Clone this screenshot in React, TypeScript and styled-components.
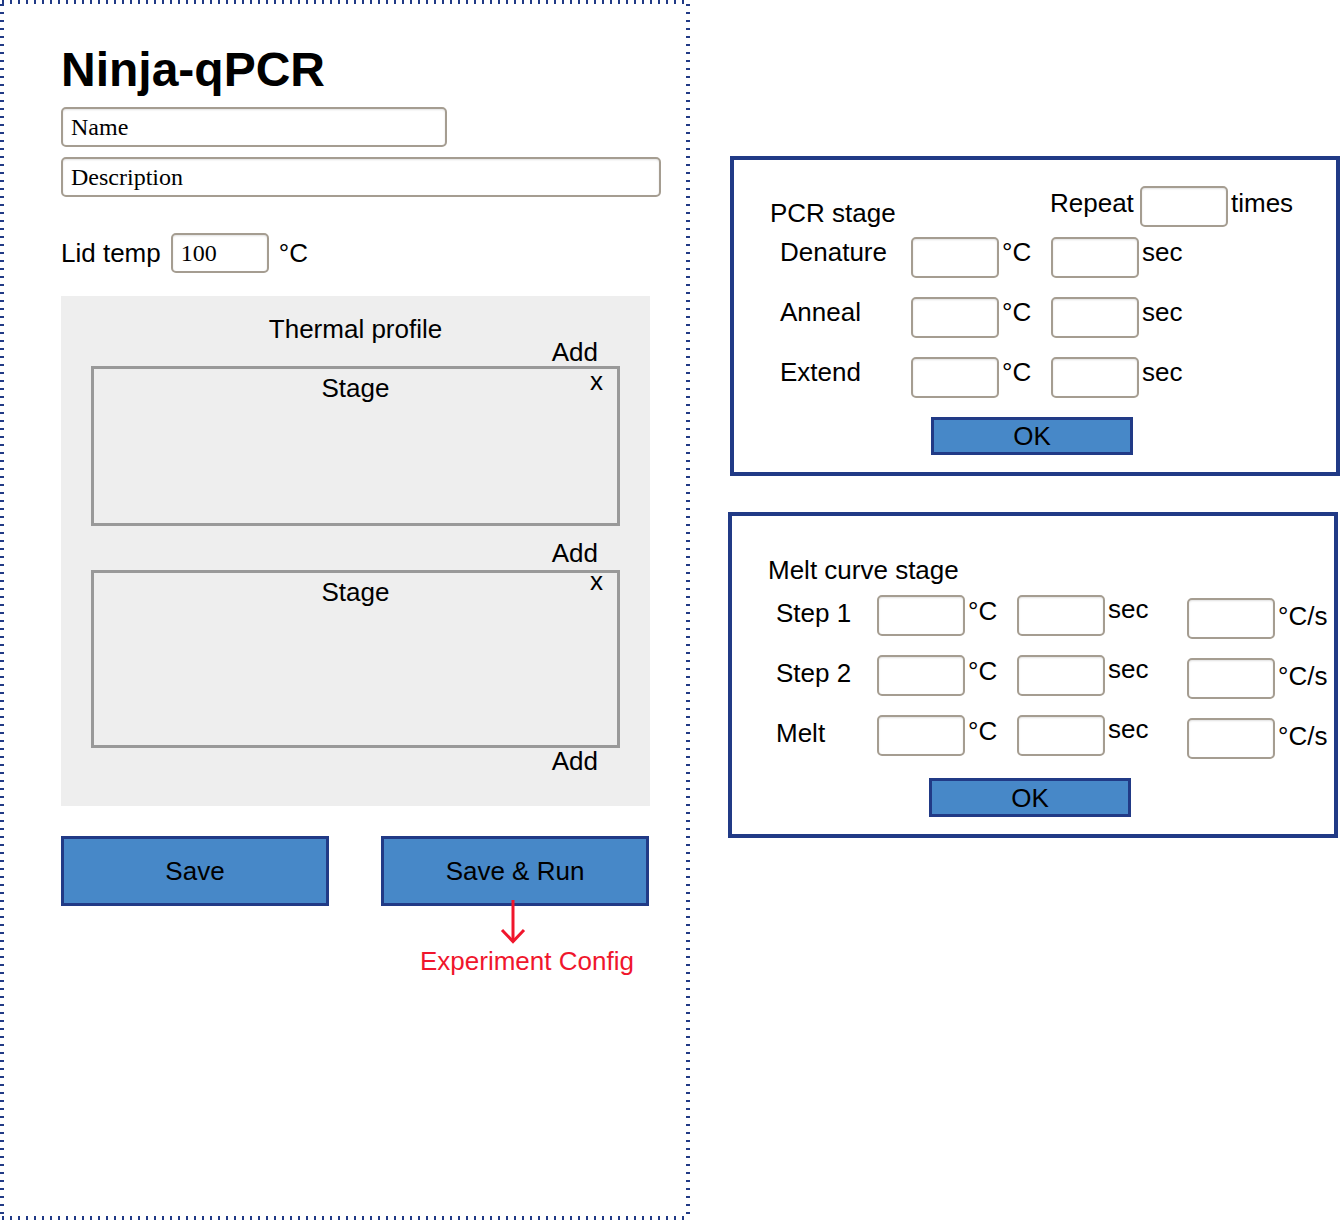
import React from "react";
import styled, { createGlobalStyle } from "styled-components";

const NAVY = "#213a86";
const BLUE = "#4788c8";
const RED = "#f0162c";
const FIELD_BORDER = "#a59d91";

const Global = createGlobalStyle`
  html, body { margin: 0; padding: 0; background: #ffffff; }
  body {
    font-family: "Liberation Sans", Arial, Helvetica, sans-serif;
    color: #000;
  }
  input::placeholder { color: #000; opacity: 1; }
`;

const Page = styled.div`
  display: flex;
  align-items: flex-start;
  width: 1340px;
  height: 1222px;
`;

/* ---------- left dotted frame ---------- */

const Frame = styled.main`
  box-sizing: border-box;
  flex-shrink: 0;
  width: 690px;
  height: 1220px;
  padding: 42px 0 0 61px;
  display: flex;
  flex-direction: column;
  align-items: flex-start;
  background-image:
    repeating-linear-gradient(to right, ${NAVY} 0 2px, transparent 2px 8px),
    repeating-linear-gradient(to right, ${NAVY} 0 2px, transparent 2px 8px),
    repeating-linear-gradient(to bottom, ${NAVY} 0 2px, transparent 2px 8px),
    repeating-linear-gradient(to bottom, ${NAVY} 0 2px, transparent 2px 8px);
  background-size: 100% 4px, 100% 4px, 4px 100%, 4px 100%;
  background-position: 2px 0, 2px 100%, 0 4px, 100% 4px;
  background-repeat: no-repeat;
`;

const Title = styled.h1`
  margin: 0;
  font-size: 48px;
  line-height: 56px;
  font-weight: bold;
`;

const TextField = styled.input<{ $w: number; $mt: number }>`
  box-sizing: border-box;
  width: ${(p) => p.$w}px;
  height: 40px;
  margin-top: ${(p) => p.$mt}px;
  padding: 0 0 0 8px;
  border: 2px solid ${FIELD_BORDER};
  border-radius: 5px;
  background: #fff;
  box-shadow: inset 0 1px 2px rgba(0, 0, 0, 0.12);
  font-family: "Liberation Serif", "Times New Roman", serif;
  font-size: 24px;
  color: #000;
  outline: none;
`;

const LidRow = styled.div`
  display: flex;
  align-items: center;
  margin-top: 36px;
  height: 40px;
`;

const LidLabel = styled.span`
  font-size: 26px;
  line-height: 30px;
  margin-right: 10px;
`;

const LidUnit = styled.span`
  font-size: 26px;
  line-height: 30px;
  margin-left: 10px;
`;

const ThermalPanel = styled.section`
  box-sizing: border-box;
  width: 589px;
  height: 510px;
  margin-top: 23px;
  padding: 21px 30px 0 30px;
  background: #eeeeee;
  display: flex;
  flex-direction: column;
`;

const PanelHeading = styled.div`
  font-size: 26px;
  line-height: 24px;
  text-align: center;
`;

const AddLink = styled.div<{ $mt: number }>`
  margin-top: ${(p) => p.$mt}px;
  padding-right: 22px;
  font-size: 26px;
  line-height: 24px;
  text-align: right;
`;

const StageBox = styled.div<{ $h: number; $mt: number }>`
  position: relative;
  box-sizing: border-box;
  flex-shrink: 0;
  width: 100%;
  height: ${(p) => p.$h}px;
  margin-top: ${(p) => p.$mt}px;
  padding-top: 7px;
  border: 3px solid #999999;
  font-size: 26px;
  line-height: 24px;
  text-align: center;
`;

const CloseMark = styled.span<{ $top: number }>`
  position: absolute;
  right: 14px;
  top: ${(p) => p.$top}px;
  font-size: 26px;
  line-height: 24px;
`;

const ButtonRow = styled.div`
  display: flex;
  align-items: flex-start;
  gap: 52px;
  margin-top: 30px;
`;

const ButtonColumn = styled.div`
  display: flex;
  flex-direction: column;
  align-items: flex-start;
`;

const ActionButton = styled.button<{ $w: number; $h: number; $ml?: number; $mt?: number }>`
  box-sizing: border-box;
  flex-shrink: 0;
  width: ${(p) => p.$w}px;
  height: ${(p) => p.$h}px;
  margin: ${(p) => p.$mt ?? 0}px 0 0 ${(p) => p.$ml ?? 0}px;
  padding: 0;
  border: 3px solid ${NAVY};
  background: ${BLUE};
  color: #000;
  font-family: "Liberation Sans", Arial, sans-serif;
  font-size: 26px;
  line-height: 30px;
  cursor: pointer;
`;

const ArrowMark = styled.svg`
  display: block;
  margin: -6px 0 0 119px;
`;

const Annotation = styled.div`
  margin: 2px 0 0 39px;
  color: ${RED};
  font-size: 26px;
  line-height: 30px;
  white-space: nowrap;
`;

/* ---------- right dialogs ---------- */

const RightColumn = styled.div`
  display: flex;
  flex-direction: column;
  align-items: flex-start;
  padding-top: 156px;
`;

const Dialog = styled.section<{ $h: number; $ml: number; $mt: number; $pt: number }>`
  box-sizing: border-box;
  width: 610px;
  height: ${(p) => p.$h}px;
  margin: ${(p) => p.$mt}px 0 0 ${(p) => p.$ml}px;
  padding-top: ${(p) => p.$pt}px;
  border: 4px solid ${NAVY};
  display: flex;
  flex-direction: column;
  align-items: flex-start;
`;

const FieldRow = styled.div<{ $mt: number; $pl: number }>`
  display: flex;
  align-items: flex-start;
  height: 41px;
  margin-top: ${(p) => p.$mt}px;
  padding-left: ${(p) => p.$pl}px;
`;

const Label = styled.span<{ $w?: number; $dy?: number; $ml?: number }>`
  display: block;
  flex-shrink: 0;
  width: ${(p) => (p.$w ? `${p.$w}px` : "auto")};
  margin-top: ${(p) => p.$dy ?? 0}px;
  margin-left: ${(p) => p.$ml ?? 0}px;
  font-size: 26px;
  line-height: 30px;
  white-space: nowrap;
`;

const NumField = styled.input<{ $dy?: number }>`
  box-sizing: border-box;
  flex-shrink: 0;
  width: 88px;
  height: 41px;
  margin: ${(p) => p.$dy ?? 0}px 0 0 0;
  padding: 0 6px;
  border: 2px solid ${FIELD_BORDER};
  border-radius: 5px;
  background: #fff;
  box-shadow: inset 0 1px 2px rgba(0, 0, 0, 0.12);
  font-size: 20px;
  outline: none;
`;

const pcrSteps = ["Denature", "Anneal", "Extend"];
const meltSteps = ["Step 1", "Step 2", "Melt"];

export default function App() {
  return (
    <Page>
      <Global />
      <Frame>
        <Title>Ninja-qPCR</Title>
        <TextField $w={386} $mt={9} placeholder="Name" />
        <TextField $w={600} $mt={10} placeholder="Description" />
        <LidRow>
          <LidLabel>Lid temp</LidLabel>
          <TextField $w={98} $mt={0} defaultValue="100" />
          <LidUnit>°C</LidUnit>
        </LidRow>

        <ThermalPanel>
          <PanelHeading>Thermal profile</PanelHeading>
          <AddLink $mt={-1}>Add</AddLink>
          <StageBox $h={160} $mt={2}>
            Stage
            <CloseMark $top={0}>x</CloseMark>
          </StageBox>
          <AddLink $mt={15}>Add</AddLink>
          <StageBox $h={178} $mt={5}>
            Stage
            <CloseMark $top={-4}>x</CloseMark>
          </StageBox>
          <AddLink $mt={1}>Add</AddLink>
        </ThermalPanel>

        <ButtonRow>
          <ActionButton $w={268} $h={70}>Save</ActionButton>
          <ButtonColumn>
            <ActionButton $w={268} $h={70}>Save &amp; Run</ActionButton>
            <ArrowMark width="26" height="44" viewBox="0 0 26 44">
              <path d="M13 0 V42" stroke={RED} strokeWidth="3" fill="none" />
              <path d="M2 30 L13 41.5 L24 30" stroke={RED} strokeWidth="3" fill="none" />
            </ArrowMark>
            <Annotation>Experiment Config</Annotation>
          </ButtonColumn>
        </ButtonRow>
      </Frame>

      <RightColumn>
        <Dialog $h={320} $ml={40} $mt={0} $pt={26}>
          <FieldRow $mt={0} $pl={0}>
            <Label $ml={36} $w={280} $dy={12}>PCR stage</Label>
            <Label $w={90} $dy={2}>Repeat</Label>
            <NumField />
            <Label $ml={3} $dy={2}>times</Label>
          </FieldRow>
          {pcrSteps.map((s, i) => (
            <FieldRow key={s} $mt={i === 0 ? 10 : 19} $pl={46}>
              <Label $w={131}>{s}</Label>
              <NumField />
              <Label $ml={3} $w={49}>°C</Label>
              <NumField />
              <Label $ml={3}>sec</Label>
            </FieldRow>
          ))}
          <ActionButton $w={202} $h={38} $ml={197} $mt={19}>OK</ActionButton>
        </Dialog>

        <Dialog $h={326} $ml={38} $mt={36} $pt={39}>
          <Label $ml={36}>Melt curve stage</Label>
          {meltSteps.map((s, i) => (
            <FieldRow key={s} $mt={i === 0 ? 10 : 19} $pl={44}>
              <Label $w={101} $dy={3}>{s}</Label>
              <NumField />
              <Label $ml={3} $w={49} $dy={1}>°C</Label>
              <NumField />
              <Label $ml={3} $w={79} $dy={-1}>sec</Label>
              <NumField $dy={3} />
              <Label $ml={3} $dy={6}>°C/s</Label>
            </FieldRow>
          ))}
          <ActionButton $w={202} $h={39} $ml={197} $mt={22}>OK</ActionButton>
        </Dialog>
      </RightColumn>
    </Page>
  );
}
